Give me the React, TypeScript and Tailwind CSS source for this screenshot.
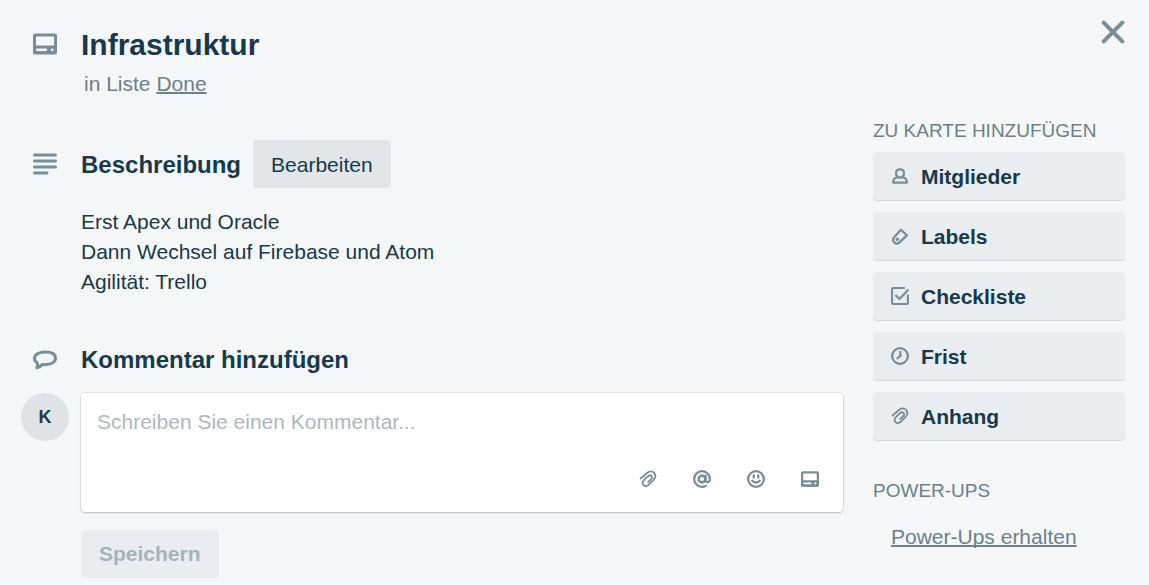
import type { ReactNode } from "react";

type IconProps = { className?: string };

function Svg({ className = "size-6", children }: IconProps & { children: ReactNode }) {
  return (
    <svg
      viewBox="0 0 24 24"
      className={`shrink-0 ${className}`}
      fill="none"
      stroke="currentColor"
      strokeWidth="3"
      strokeLinecap="round"
      strokeLinejoin="round"
      aria-hidden="true"
    >
      {children}
    </svg>
  );
}

const CardIcon = ({ className }: IconProps) => (
  <Svg className={className}>
    <path
      stroke="none"
      fill="currentColor"
      fillRule="evenodd"
      d="M2.500 1.500h19a2.500 2.500 0 0 1 2.500 2.500v16a2.500 2.500 0 0 1-2.500 2.500h-19A2.500 2.500 0 0 1 0 20V4a2.500 2.500 0 0 1 2.500-2.500ZM3.600 4.500a.6.6 0 0 0-.6.6v8.400h18V5.100a.6.6 0 0 0-.6-.6ZM4.200 16.500a1.300 1.300 0 0 0 0 2.600h8.600a1.300 1.300 0 0 0 0-2.600ZM19.200 16.400a1.400 1.400 0 1 0 0 2.800a1.400 1.400 0 0 0 0-2.800Z"
    />
  </Svg>
);

const DescriptionIcon = () => (
  <Svg>
    <path d="M1.500 3h21M1.500 9h21M1.500 15h21M1.500 21h12.500" />
  </Svg>
);

const CommentIcon = () => (
  <Svg>
    <path d="M12.500 4C6.500 4 1.500 6.200 1.500 10.200c0 2.300 1.300 3.800 3 4.700.3 2-.1 3.500-.6 4.900 2.300-.5 4-1.500 5.100-3.200 1.100.1 2.200.1 3.500 0 5.800-.3 10-2.700 10-6.400C22.500 6.200 18.500 4 12.500 4Z" />
  </Svg>
);

const CloseIcon = () => (
  <Svg>
    <path strokeWidth="4" d="M2.700 2.700l18.600 18.600M21.300 2.700L2.700 21.300" />
  </Svg>
);

const MemberIcon = ({ className }: IconProps) => (
  <Svg className={className}>
    <path d="M8.600 12.800C7.300 11.600 6.700 9.900 6.700 8.200 6.700 5 8.800 3 12 3s5.300 2 5.300 5.200c0 1.700-.6 3.400-1.900 4.600" />
    <path d="M8.600 13C4.800 14.400 2.900 17 2.900 20.900h18.200c0-3.900-1.900-6.500-5.700-7.900-2 1.500-4.800 1.500-6.800 0Z" />
  </Svg>
);

const LabelIcon = ({ className }: IconProps) => (
  <Svg className={className}>
    <path d="M13.300 3.700L21.200 11.200 11.800 20.200c-2.300 2.200-5.400 2.300-7.400.3-2-2.100-1.900-5.300.2-7.500Z" />
    <circle cx="8.500" cy="16.400" r="1.900" fill="currentColor" strokeWidth="1" />
  </Svg>
);

const ChecklistIcon = ({ className }: IconProps) => (
  <Svg className={className}>
    <path strokeWidth="2.800" d="M17.500 1.400H2.400a1 1 0 0 0-1 1v19.200a1 1 0 0 0 1 1h19.200a1 1 0 0 0 1-1V11" />
    <path d="M6.800 11.500l4.500 4.500L22.300 4.300" />
  </Svg>
);

const ClockIcon = ({ className }: IconProps) => (
  <Svg className={className}>
    <circle cx="12" cy="12" r="10.500" />
    <path d="M12.500 6.500v5.400l-3.800 3.100" />
  </Svg>
);

const ClipIcon = ({ className }: IconProps) => (
  <Svg className={className}>
    <path
      strokeWidth="2.400"
      d="M2.200 11.400L9.800 4.700c3.700-3.200 7.600-3.500 10.200-.9 2.600 2.700 2.300 6.300-.8 9.600l-5.400 5.600c-2.800 2.700-5.700 3.100-7.700 1.200-2-2-1.700-4.700 1-7.400l4.600-4.300c1.900-1.700 3.700-1.900 4.900-.7s1 2.900-.6 4.600l-3.600 3.600"
    />
  </Svg>
);

const MentionIcon = ({ className }: IconProps) => (
  <Svg className={className}>
    <circle cx="12" cy="12" r="4.500" strokeWidth="3.400" />
    <path d="M16.700 7.500v6.300c0 3.600 5.800 3.300 5.800-1.800A10.500 10.500 0 1 0 12 22.500c2 0 3.500-.4 5.100-1.300" />
  </Svg>
);

const SmileIcon = ({ className }: IconProps) => (
  <Svg className={className}>
    <circle cx="12" cy="12" r="10.500" />
    <path d="M9 7.300v2.700M15 7.300v2.700M7 14.200c2.200 3.500 7.800 3.500 10 0" />
  </Svg>
);

const actions = [
  { label: "Mitglieder", Icon: MemberIcon },
  { label: "Labels", Icon: LabelIcon },
  { label: "Checkliste", Icon: ChecklistIcon },
  { label: "Frist", Icon: ClockIcon },
  { label: "Anhang", Icon: ClipIcon },
];

const tools = [
  { label: "Anhang hinzufügen", Icon: ClipIcon },
  { label: "Mitglied erwähnen", Icon: MentionIcon },
  { label: "Emoji hinzufügen", Icon: SmileIcon },
  { label: "Karte hinzufügen", Icon: CardIcon },
];

function Gutter({ children }: { children: ReactNode }) {
  return <div className="flex w-12 shrink-0 justify-center text-[#798d99]">{children}</div>;
}

export default function App() {
  return (
    <div className="min-h-screen bg-[#f5f6f8] pr-6 pb-2 pl-[21px] font-['Liberation_Sans',Arial,sans-serif] text-[21px] leading-[30px] text-[#17394d]">
      <header className="flex items-start gap-3 pt-5">
        <div className="flex min-w-0 flex-1 gap-3 pt-[7px]">
          <Gutter>
            <CardIcon className="mt-[5px] size-6" />
          </Gutter>
          <div>
            <h1 className="text-[30px] leading-9 font-bold">Infrastruktur</h1>
            <p className="mt-1.5 pl-[3px] text-[#6b808c]">
              in Liste{" "}
              <a href="#done" className="underline decoration-2 [text-decoration-skip-ink:none]">
                Done
              </a>
            </p>
          </div>
        </div>
        <button type="button" aria-label="Schließen" className="text-[#798d99]">
          <CloseIcon />
        </button>
      </header>

      <div className="mt-[17px] flex items-start gap-[30px]">
        <main className="min-w-0 flex-1 pt-6">
          <section>
            <div className="flex items-center gap-3">
              <Gutter>
                <DescriptionIcon />
              </Gutter>
              <h2 className="pt-0.5 text-2xl font-bold">Beschreibung</h2>
              <button type="button" className="h-12 rounded-[4px] bg-[#e2e6e9] px-[18px] pt-0.5">
                Bearbeiten
              </button>
            </div>
            <p className="mt-[19px] ml-[60px]">
              Erst Apex und Oracle
              <br />
              Dann Wechsel auf Firebase und Atom
              <br />
              Agilität: Trello
            </p>
          </section>

          <section className="mt-[39px]">
            <div className="flex h-12 items-center gap-3">
              <Gutter>
                <CommentIcon />
              </Gutter>
              <h2 className="text-2xl font-bold">
                <label htmlFor="comment">Kommentar hinzufügen</label>
              </h2>
            </div>
            <div className="mt-[9px] flex items-start gap-3">
              <div className="flex size-12 shrink-0 items-center justify-center rounded-full bg-[#dfe3e6] text-lg font-bold">
                K
              </div>
              <form className="min-w-0 flex-1">
                <div className="rounded-[4px] bg-white pb-[9px] shadow-[0_1px_2px_#091e4230,0_0_0_1px_#091e4214]">
                  <textarea
                    id="comment"
                    rows={1}
                    placeholder="Schreiben Sie einen Kommentar..."
                    className="block h-[62px] w-full resize-none bg-transparent px-4 pt-3.5 outline-none placeholder:text-[#acb8bf]"
                  />
                  <div className="flex justify-end gap-1.5 pr-[9px] text-[#798d99]">
                    {tools.map(({ label, Icon }) => (
                      <button key={label} type="button" aria-label={label} className="flex size-12 items-center justify-center">
                        <Icon className="size-[18px]" />
                      </button>
                    ))}
                  </div>
                </div>
                <button type="submit" disabled className="mt-[18px] h-12 rounded-[4px] bg-[#e9edef] px-[18px] font-bold text-[#a5b3bb]">
                  Speichern
                </button>
              </form>
            </div>
          </section>
        </main>

        <aside className="w-[252px] shrink-0">
          <h3 className="text-[19px] whitespace-nowrap text-[#6b808c] uppercase">Zu Karte hinzufügen</h3>
          <div className="mt-1.5 flex flex-col gap-3">
            {actions.map(({ label, Icon }) => (
              <button
                key={label}
                type="button"
                className="flex h-12 items-center gap-3 rounded-[4px] bg-[#e9edef] px-[18px] text-left font-bold shadow-[0_1px_0_0_#d3d9dd]"
              >
                <Icon className="size-[18px] text-[#798d99]" />
                <span className="pt-0.5">{label}</span>
              </button>
            ))}
          </div>
          <h3 className="mt-9 text-[19px] text-[#6b808c] uppercase">Power-Ups</h3>
          <a href="#power-ups" className="mt-4 ml-[18px] inline-block text-[#6b808c] underline decoration-2 [text-decoration-skip-ink:none]">
            Power-Ups erhalten
          </a>
        </aside>
      </div>
    </div>
  );
}
